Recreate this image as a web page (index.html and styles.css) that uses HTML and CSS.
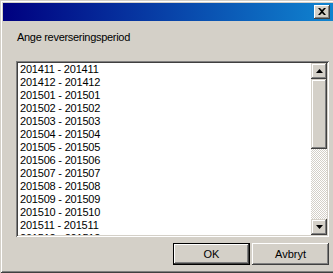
FILE: index.html
```html
<!DOCTYPE html>
<html lang="sv">
<head>
    <meta charset="UTF-8">
    <title>Ange reverseringsperiod</title>
    <link rel="stylesheet" href="styles.css">
</head>
<body>
    <div class="dialog">
        <div class="titlebar">
            <span class="close-btn">
                <svg width="8" height="7" viewBox="0 0 8 7"><path d="M0 0h2l2 2 2-2h2L5 3.5 8 7H6L4 5 2 7H0l3-3.5z" fill="#000"/></svg>
            </span>
        </div>
        <div class="content">
            <div class="prompt">Ange reverseringsperiod</div>
            <div class="listbox">
                <ul class="items">
                    <li>201411 - 201411</li>
                    <li>201412 - 201412</li>
                    <li>201501 - 201501</li>
                    <li>201502 - 201502</li>
                    <li>201503 - 201503</li>
                    <li>201504 - 201504</li>
                    <li>201505 - 201505</li>
                    <li>201506 - 201506</li>
                    <li>201507 - 201507</li>
                    <li>201508 - 201508</li>
                    <li>201509 - 201509</li>
                    <li>201510 - 201510</li>
                    <li>201511 - 201511</li>
                    <li>201512 - 201512</li>
                </ul>
                <div class="scrollbar">
                    <div class="sb-btn">
                        <svg width="7" height="4" viewBox="0 0 7 4"><path d="M3.5 0L7 4H0z" fill="#000"/></svg>
                    </div>
                    <div class="sb-track">
                        <div class="sb-thumb"></div>
                    </div>
                    <div class="sb-btn">
                        <svg width="7" height="4" viewBox="0 0 7 4"><path d="M0 0h7L3.5 4z" fill="#000"/></svg>
                    </div>
                </div>
            </div>
            <div class="buttons">
                <button class="btn btn-default">OK</button>
                <button class="btn">Avbryt</button>
            </div>
        </div>
    </div>
</body>
</html>
```

FILE: styles.css
```css
body {
    margin: 0;
    width: 333px;
    height: 273px;
    overflow: hidden;
    background-color: #d4d0c8;
    font-family: "Liberation Sans", Arial, sans-serif;
    font-size: 11px;
    color: #000;
}
.dialog {
    width: 336px;
    height: 273px;
    box-sizing: border-box;
    padding: 3px;
    display: flex;
    flex-direction: column;
    background-color: #d4d0c8;
    box-shadow: inset 1px 1px #d4d0c8, inset -1px -1px #404040, inset 2px 2px #fff, inset -2px -2px #808080;
}
.titlebar {
    height: 18px;
    flex-shrink: 0;
    display: flex;
    align-items: center;
    justify-content: flex-end;
    padding-right: 3px;
    background: linear-gradient(to right, #000080, #1084d0);
}
.close-btn {
    width: 16px;
    height: 14px;
    box-sizing: border-box;
    display: flex;
    align-items: center;
    justify-content: center;
    background-color: #d4d0c8;
    box-shadow: inset -1px -1px #404040, inset 1px 1px #fff, inset -2px -2px #808080, inset 2px 2px #d4d0c8;
}
.close-btn svg {
    margin: 0 1px 1px 0;
}
.content {
    flex: 1;
    display: flex;
    flex-direction: column;
    padding: 10px 4px 5px 13px;
}
.prompt {
    line-height: 13px;
    margin-left: 1px;
    letter-spacing: -0.3px;
}
.listbox {
    margin-top: 17px;
    height: 176px;
    box-sizing: border-box;
    padding: 2px;
    display: flex;
    background-color: #fff;
    box-shadow: inset 1px 1px #808080, inset -1px -1px #fff, inset 2px 2px #404040, inset -2px -2px #d4d0c8;
}
.items {
    flex: 1;
    list-style: none;
    margin: 0;
    padding: 0 0 0 2px;
    overflow: hidden;
}
.items li {
    line-height: 13px;
    letter-spacing: -0.2px;
    white-space: nowrap;
}
.scrollbar {
    width: 16px;
    display: flex;
    flex-direction: column;
}
.sb-btn {
    width: 16px;
    height: 16px;
    flex-shrink: 0;
    box-sizing: border-box;
    display: flex;
    align-items: center;
    justify-content: center;
    background-color: #d4d0c8;
    box-shadow: inset -1px -1px #404040, inset 1px 1px #d4d0c8, inset -2px -2px #808080, inset 2px 2px #fff;
}
.sb-track {
    flex: 1;
    background-color: #fff;
    background-image: conic-gradient(#fff 25%, #d4d0c8 0 50%, #fff 0 75%, #d4d0c8 0);
    background-size: 2px 2px;
}
.sb-thumb {
    height: 70px;
    background-color: #d4d0c8;
    box-shadow: inset -1px -1px #404040, inset 1px 1px #d4d0c8, inset -2px -2px #808080, inset 2px 2px #fff;
}
.buttons {
    margin-top: 6px;
    display: flex;
    justify-content: flex-end;
    gap: 2px;
}
.btn {
    width: 77px;
    height: 22px;
    padding: 0;
    border: none;
    font-family: "Liberation Sans", Arial, sans-serif;
    font-size: 11px;
    color: #000;
    background-color: #d4d0c8;
    box-shadow: inset -1px -1px #404040, inset 1px 1px #fff, inset -2px -2px #808080, inset 2px 2px #d4d0c8;
}
.btn-default {
    box-shadow: inset 0 0 0 1px #000, inset -2px -2px #404040, inset 2px 2px #fff, inset -3px -3px #808080;
}
```
